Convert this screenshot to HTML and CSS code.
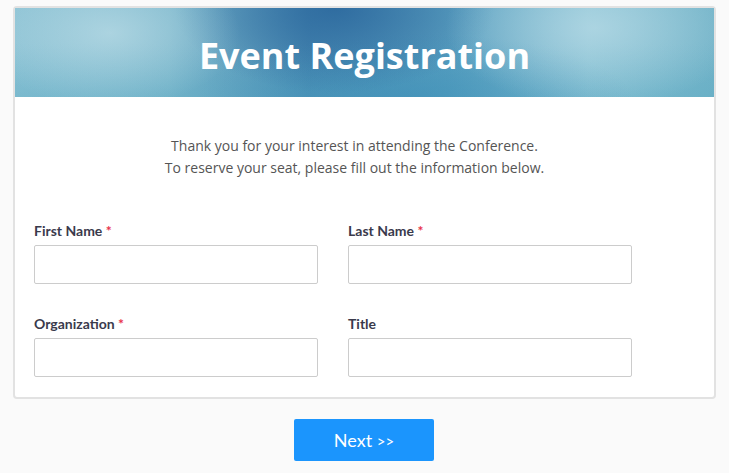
FILE: index.html
```html
<!DOCTYPE html>
<html>
<head>
<meta charset="utf-8">
<link rel="stylesheet" href="styles.css">
</head>
<body>
<div class="card">
  <div class="header"><h1 class="title">Event Registration</h1></div>
  <div class="intro">
    <p>Thank you for your interest in attending the Conference.</p>
    <p>To reserve your seat, please fill out the information below.</p>
  </div>
  <div class="form">
    <div class="field">
      <label class="label">First Name <span class="req">*</span></label>
      <input class="input" type="text">
    </div>
    <div class="field">
      <label class="label">Last Name <span class="req">*</span></label>
      <input class="input" type="text">
    </div>
    <div class="field">
      <label class="label">Organization <span class="req">*</span></label>
      <input class="input" type="text">
    </div>
    <div class="field">
      <label class="label">Title</label>
      <input class="input" type="text">
    </div>
  </div>
</div>
<div class="actions">
  <button class="next">Next <span class="arrows">&gt;&gt;</span></button>
</div>
</body>
</html>
```
FILE: styles.css
```css
html, body {
  margin: 0;
  padding: 0;
  background: #fafafa;
}
body {
  font-family: "Open Sans", "DejaVu Sans", sans-serif;
}
.card {
  box-sizing: border-box;
  width: 703px;
  margin: 6px 0 0 13px;
  border: 2px solid #e2e2e2;
  border-radius: 4px;
  background: #fff;
  padding-bottom: 20px;
}
.header {
  height: 89px;
  display: flex;
  align-items: center;
  justify-content: center;
  background:
    radial-gradient(ellipse 130px 75px at 95px 25px, rgba(200,228,236,0.6), rgba(200,228,236,0) 100%),
    radial-gradient(ellipse 150px 80px at 580px 20px, rgba(195,225,235,0.6), rgba(195,225,235,0) 100%),
    radial-gradient(ellipse 160px 85px at 320px 0px, rgba(40,100,155,0.8), rgba(40,100,155,0) 100%),
    radial-gradient(ellipse 220px 70px at 400px 95px, rgba(50,135,180,0.5), rgba(50,135,180,0) 100%),
    linear-gradient(180deg, rgba(0,0,0,0) 40%, rgba(90,170,195,0.35) 100%),
    linear-gradient(90deg, #8cc2d4 0%, #7ab6cb 22%, #4a8bb3 42%, #5a9fc0 62%, #88c1d3 82%, #72b3c8 100%);
}
.title {
  margin: 0;
  color: #fff;
  font-family: "Open Sans", sans-serif;
  font-weight: 700;
  font-size: 36px;
  line-height: 40px;
  position: relative;
  top: 3px;
}
.intro {
  padding: 38px 20px 0 0;
  text-align: center;
  color: #555;
  font-size: 14px;
  line-height: 22px;
}
.intro p {
  margin: 0;
}
.form {
  display: grid;
  grid-template-columns: 284px 284px;
  column-gap: 30px;
  row-gap: 32px;
  padding: 44px 0 0 19px;
}
.field {
  display: flex;
  flex-direction: column;
  gap: 6px;
}
.label {
  font-family: Lato, "Liberation Sans", sans-serif;
  font-weight: 700;
  font-size: 14px;
  line-height: 16px;
  color: #3a3a4c;
}
.req {
  color: #e8304a;
}
.input {
  box-sizing: border-box;
  width: 284px;
  height: 39px;
  margin: 0;
  border: 1px solid #cccccc;
  border-radius: 2px;
  background: #fff;
}
.actions {
  display: flex;
  justify-content: center;
  width: 728px;
  padding-top: 20px;
}
.next {
  width: 140px;
  height: 42px;
  border: none;
  border-radius: 2px;
  background: #1b95fd;
  color: #fff;
  font-family: Lato, "Liberation Sans", sans-serif;
  font-size: 18px;
  padding: 0;
}
.arrows {
  font-size: 15px;
}
```
